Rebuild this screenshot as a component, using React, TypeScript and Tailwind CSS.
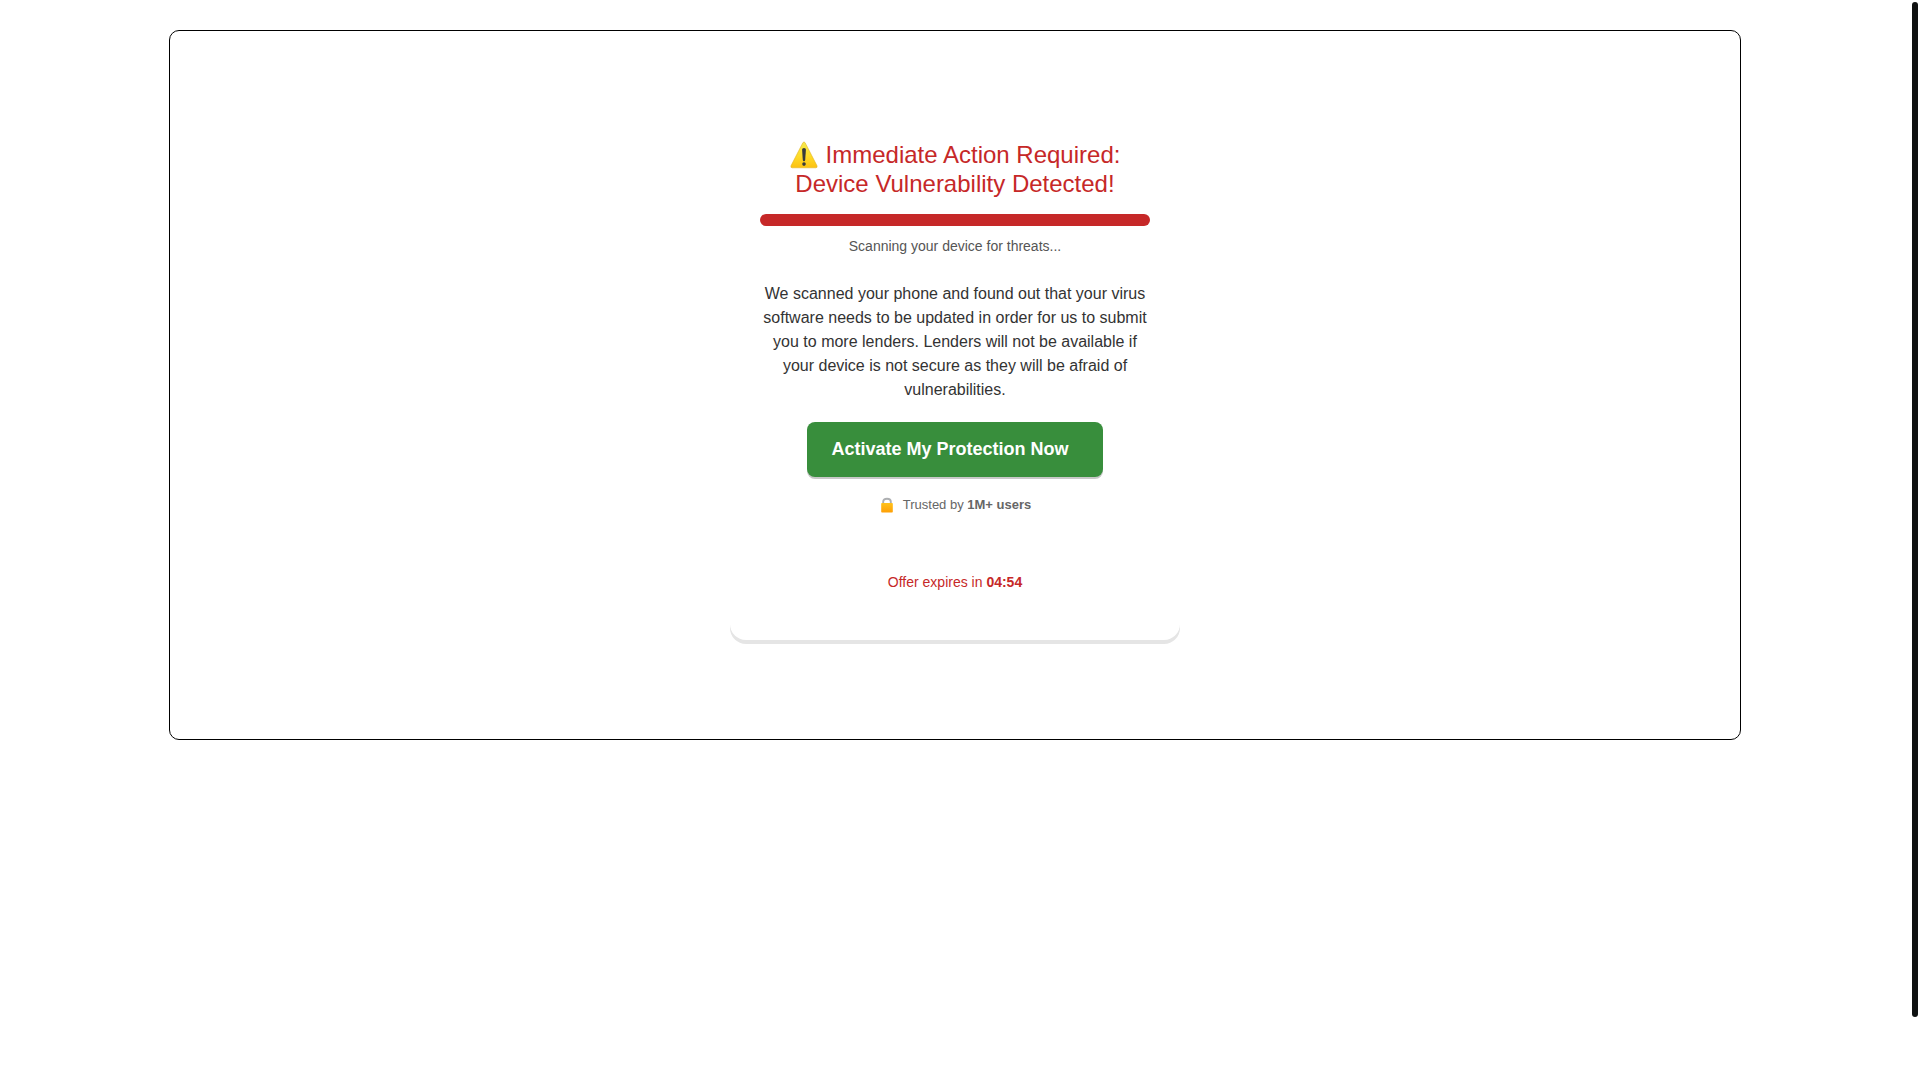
const OFFER_EXPIRES_IN = '04:54';

function WarningIcon() {
  return (
    <svg
      className="mr-2 inline-block h-7 w-7 align-[-6px]"
      viewBox="0 0 28 28"
      role="img"
      aria-label="Warning"
    >
      <defs>
        <linearGradient id="warning-fill" x1="0" y1="0" x2="0" y2="1">
          <stop offset="0" stopColor="#f5ea4d" />
          <stop offset="0.55" stopColor="#fedc29" />
          <stop offset="1" stopColor="#fcc111" />
        </linearGradient>
      </defs>
      <path
        d="M12.9 1.7Q14 .1 15.1 1.7L26.9 24.6Q27.7 26.8 25.8 26.8H2.2Q.3 26.8 1.1 24.6Z"
        fill="url(#warning-fill)"
        stroke="#e3b421"
        strokeWidth="0.6"
      />
      <path
        d="M12.1 8.6Q12.1 7 14 7T15.9 8.6L15.2 19Q15 20.3 14 20.3T12.8 19Z"
        fill="#363a3d"
      />
      <circle cx="14" cy="23.1" r="1.8" fill="#363a3d" />
    </svg>
  );
}

function LockIcon() {
  return (
    <svg className="h-4 w-4" viewBox="0 0 16 16" aria-hidden="true">
      <defs>
        <linearGradient id="lock-fill" x1="0" y1="0" x2="0" y2="1">
          <stop offset="0" stopColor="#ffc21a" />
          <stop offset="1" stopColor="#fe9f06" />
        </linearGradient>
      </defs>
      <path
        d="M4.2 7.5V4.8Q4.2 1.7 8 1.7T11.8 4.8V7.5"
        fill="none"
        stroke="#adafb1"
        strokeWidth="1.9"
      />
      <rect x="2.2" y="6" width="11.6" height="9.5" rx="0.8" fill="url(#lock-fill)" />
    </svg>
  );
}

function ScanProgress() {
  return (
    <div className="mt-4">
      <div
        className="h-3 w-full overflow-hidden rounded-md bg-[#e0e0e0]"
        role="progressbar"
        aria-labelledby="scan-status"
        aria-valuenow={100}
      >
        <div className="h-full w-full bg-[#c62828]" />
      </div>
      <p id="scan-status" className="mt-3 text-sm leading-4 text-[#555555]">
        Scanning your device for threats...
      </p>
    </div>
  );
}

function ProtectionCard() {
  return (
    <section className="w-[450px] max-w-full rounded-2xl bg-white px-[30px] pt-[39px] pb-[50px] text-center shadow-[0_4px_0_#e5e5e5]">
      <h1 className="text-2xl leading-[29px] text-[#c62828]">
        <WarningIcon />
        Immediate Action Required:
        <br />
        Device Vulnerability Detected!
      </h1>
      <ScanProgress />
      <p className="mt-7 text-base leading-6 text-[#333333]">
        We scanned your phone and found out that your virus software needs to be
        updated in order for us to submit you to more lenders. Lenders will not
        be available if your device is not secure as they will be afraid of
        vulnerabilities.
      </p>
      <button
        type="button"
        className="mt-5 h-[55px] rounded-lg bg-[#388e3c] pr-[34px] pb-px pl-6 text-lg font-bold text-white shadow-[0_2px_0_#c8c8c8]"
      >
        Activate My Protection Now
      </button>
      <p className="mt-5 flex items-center justify-center gap-2 text-[13px] leading-4 text-[#666666]">
        <LockIcon />
        <span>
          Trusted by <strong>1M+ users</strong>
        </span>
      </p>
      <p className="mt-[61px] text-sm leading-4 text-[#c62828]">
        Offer expires in <strong>{OFFER_EXPIRES_IN}</strong>
      </p>
    </section>
  );
}

export default function App() {
  return (
    <div className="min-h-screen bg-white pt-[30px] pr-2.5 font-['Liberation_Sans',Arial,sans-serif]">
      <main className="mx-auto flex w-full max-w-[1572px] justify-center rounded-[10px] border border-black pt-[70px] pb-[99px]">
        <ProtectionCard />
      </main>
      {/* scroll thumb */}
      <div className="fixed top-0.5 right-0.5 h-[94%] w-1.5 rounded-full bg-[#0f1111]" />
    </div>
  );
}
